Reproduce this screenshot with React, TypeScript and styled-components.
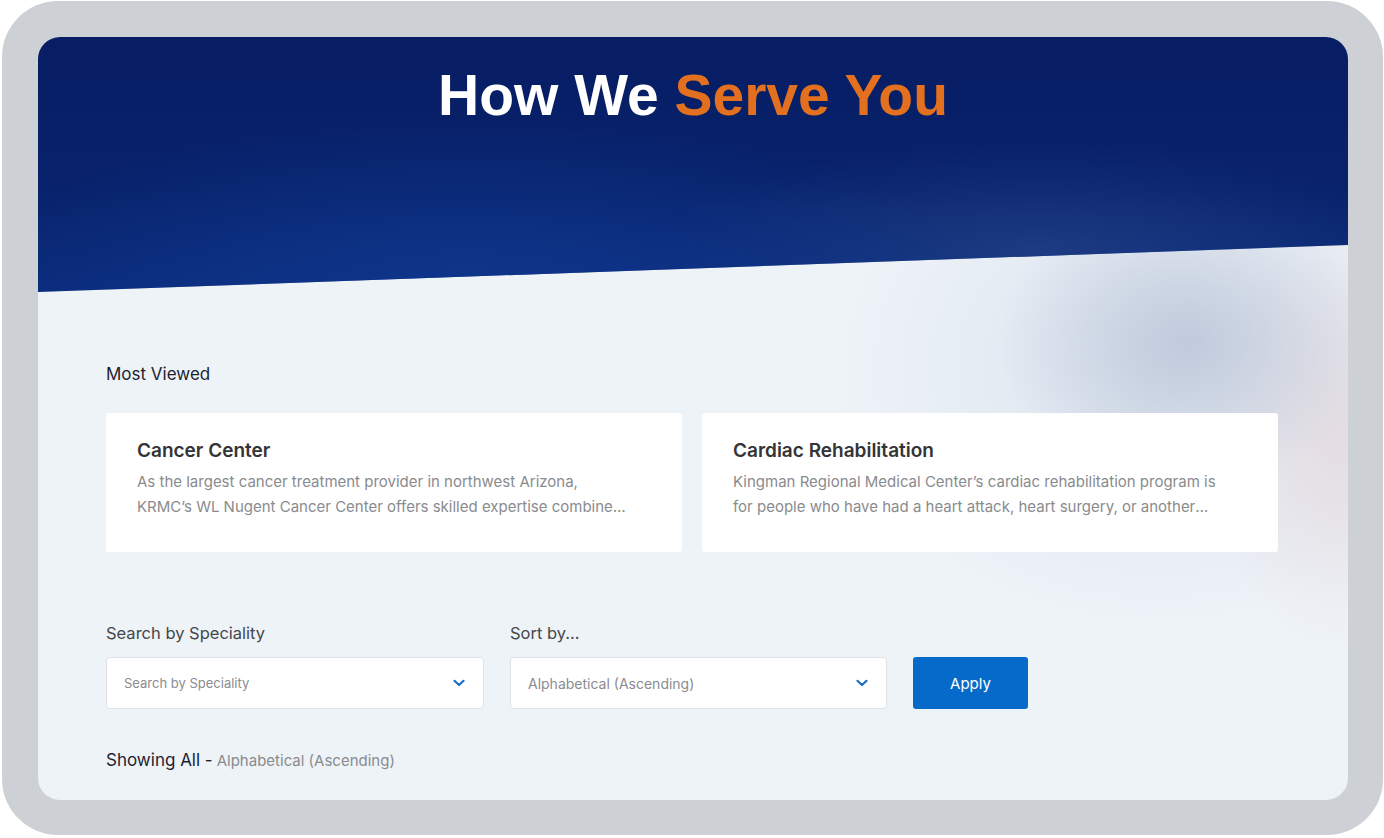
import React from "react";
import styled, { createGlobalStyle } from "styled-components";

const GlobalStyle = createGlobalStyle`
  html, body { margin: 0; padding: 0; background: #ffffff; }
  * { box-sizing: border-box; }
  body { font-family: Inter, "Noto Sans", sans-serif; }
`;

const Frame = styled.div`
  width: 1381px;
  height: 834px;
  margin: 1px 0 0 2px;
  padding: 36px 35px 35px 36px;
  background: #cdd1d5;
  border-radius: 56px;
`;

const Screen = styled.div`
  height: 100%;
  border-radius: 22px;
  overflow: hidden;
  background:
    radial-gradient(ellipse 190px 150px at 1150px 305px, rgba(188, 198, 216, 0.85), rgba(188, 198, 216, 0) 100%),
    radial-gradient(ellipse 130px 210px at 1300px 400px, rgba(228, 220, 224, 0.95), rgba(228, 220, 224, 0) 100%),
    radial-gradient(ellipse 320px 260px at 1120px 330px, rgba(210, 220, 234, 0.7), rgba(210, 220, 234, 0) 100%),
    #eef3f8;
`;

const Hero = styled.header`
  height: 255px;
  clip-path: polygon(0 0, 100% 0, 100% 208px, 0 255px);
  background:
    radial-gradient(ellipse 520px 170px at 430px 250px, rgba(16, 58, 146, 0.75), rgba(16, 58, 146, 0) 100%),
    radial-gradient(ellipse 380px 110px at 1000px 215px, rgba(40, 72, 140, 0.6), rgba(40, 72, 140, 0) 100%),
    linear-gradient(180deg, #071d64 0%, #08226b 60%, #0b2b7a 100%);
  padding-top: 25px;
  display: flex;
  justify-content: center;
`;

const Title = styled.h1`
  margin: 0;
  font-family: "Liberation Sans", Arial, sans-serif;
  font-weight: 700;
  font-size: 57px;
  line-height: 66px;
  color: #ffffff;
`;

const Accent = styled.span`
  color: #e3701f;
`;

const Content = styled.main`
  padding: 70px 70px 0 68px;
  display: flex;
  flex-direction: column;
`;

const SectionLabel = styled.h2`
  margin: 0;
  font-size: 17px;
  line-height: 24px;
  font-weight: 400;
  color: #1d2330;
`;

const Cards = styled.div`
  margin-top: 27px;
  display: grid;
  grid-template-columns: 1fr 1fr;
  gap: 20px;
`;

const Card = styled.article`
  height: 139px;
  background: #ffffff;
  border-radius: 3px;
  padding: 25px 31px;
`;

const CardTitle = styled.h3`
  margin: 0;
  font-size: 19px;
  line-height: 26px;
  font-weight: 600;
  color: #333436;
`;

const CardText = styled.p`
  margin: 5px 0 0;
  max-width: 494px;
  font-size: 15px;
  line-height: 25px;
  color: #8a8b8e;
  display: -webkit-box;
  -webkit-line-clamp: 2;
  -webkit-box-orient: vertical;
  overflow: hidden;
`;

const Filters = styled.div`
  margin-top: 69px;
  display: flex;
  align-items: flex-end;
  gap: 26px;
`;

const Field = styled.label<{ $w: number }>`
  width: ${(p) => p.$w}px;
  display: flex;
  flex-direction: column;
  gap: 12px;
`;

const FieldLabel = styled.span`
  font-size: 16.5px;
  line-height: 24px;
  color: #45474b;
`;

const Select = styled.div`
  height: 52px;
  background: #ffffff;
  border: 1px solid #dfe3e8;
  border-radius: 4px;
  padding: 0 18px 0 17px;
  display: flex;
  align-items: center;
  justify-content: space-between;
`;

const SelectText = styled.span<{ $size: number }>`
  font-size: ${(p) => p.$size}px;
  color: #8b8c90;
`;

const ApplyButton = styled.button`
  width: 115px;
  height: 52px;
  border: none;
  border-radius: 3px;
  background: #066aca;
  color: #ffffff;
  font-family: inherit;
  font-size: 15px;
  cursor: pointer;
`;

const Showing = styled.p`
  margin: 39px 0 0;
  font-size: 17px;
  line-height: 24px;
  color: #1d2330;
`;

const Muted = styled.span`
  font-size: 15px;
  color: #8a8b8e;
  margin-left: 4px;
`;

const Chevron = () => (
  <svg width="12" height="8" viewBox="0 0 12 8" fill="none">
    <polyline points="1.5,1.8 6,6 10.5,1.8" stroke="#1b6fc8" strokeWidth="2.2" strokeLinecap="round" strokeLinejoin="round" />
  </svg>
);

const cards = [
  {
    title: "Cancer Center",
    text: "As the largest cancer treatment provider in northwest Arizona, KRMC’s WL Nugent Cancer Center offers skilled expertise combined with the latest technology and compassionate care.",
  },
  {
    title: "Cardiac Rehabilitation",
    text: "Kingman Regional Medical Center’s cardiac rehabilitation program is for people who have had a heart attack, heart surgery, or another cardiac condition.",
  },
];

export default function App() {
  return (
    <>
      <GlobalStyle />
      <Frame>
        <Screen>
          <Hero>
            <Title>
              How We <Accent>Serve You</Accent>
            </Title>
          </Hero>
          <Content>
            <SectionLabel>Most Viewed</SectionLabel>
            <Cards>
              {cards.map((c) => (
                <Card key={c.title}>
                  <CardTitle>{c.title}</CardTitle>
                  <CardText>{c.text}</CardText>
                </Card>
              ))}
            </Cards>
            <Filters>
              <Field $w={378}>
                <FieldLabel>Search by Speciality</FieldLabel>
                <Select>
                  <SelectText $size={13}>Search by Speciality</SelectText>
                  <Chevron />
                </Select>
              </Field>
              <Field $w={377}>
                <FieldLabel>Sort by...</FieldLabel>
                <Select>
                  <SelectText $size={14}>Alphabetical (Ascending)</SelectText>
                  <Chevron />
                </Select>
              </Field>
              <ApplyButton>Apply</ApplyButton>
            </Filters>
            <Showing>
              Showing All -<Muted>Alphabetical (Ascending)</Muted>
            </Showing>
          </Content>
        </Screen>
      </Frame>
    </>
  );
}
